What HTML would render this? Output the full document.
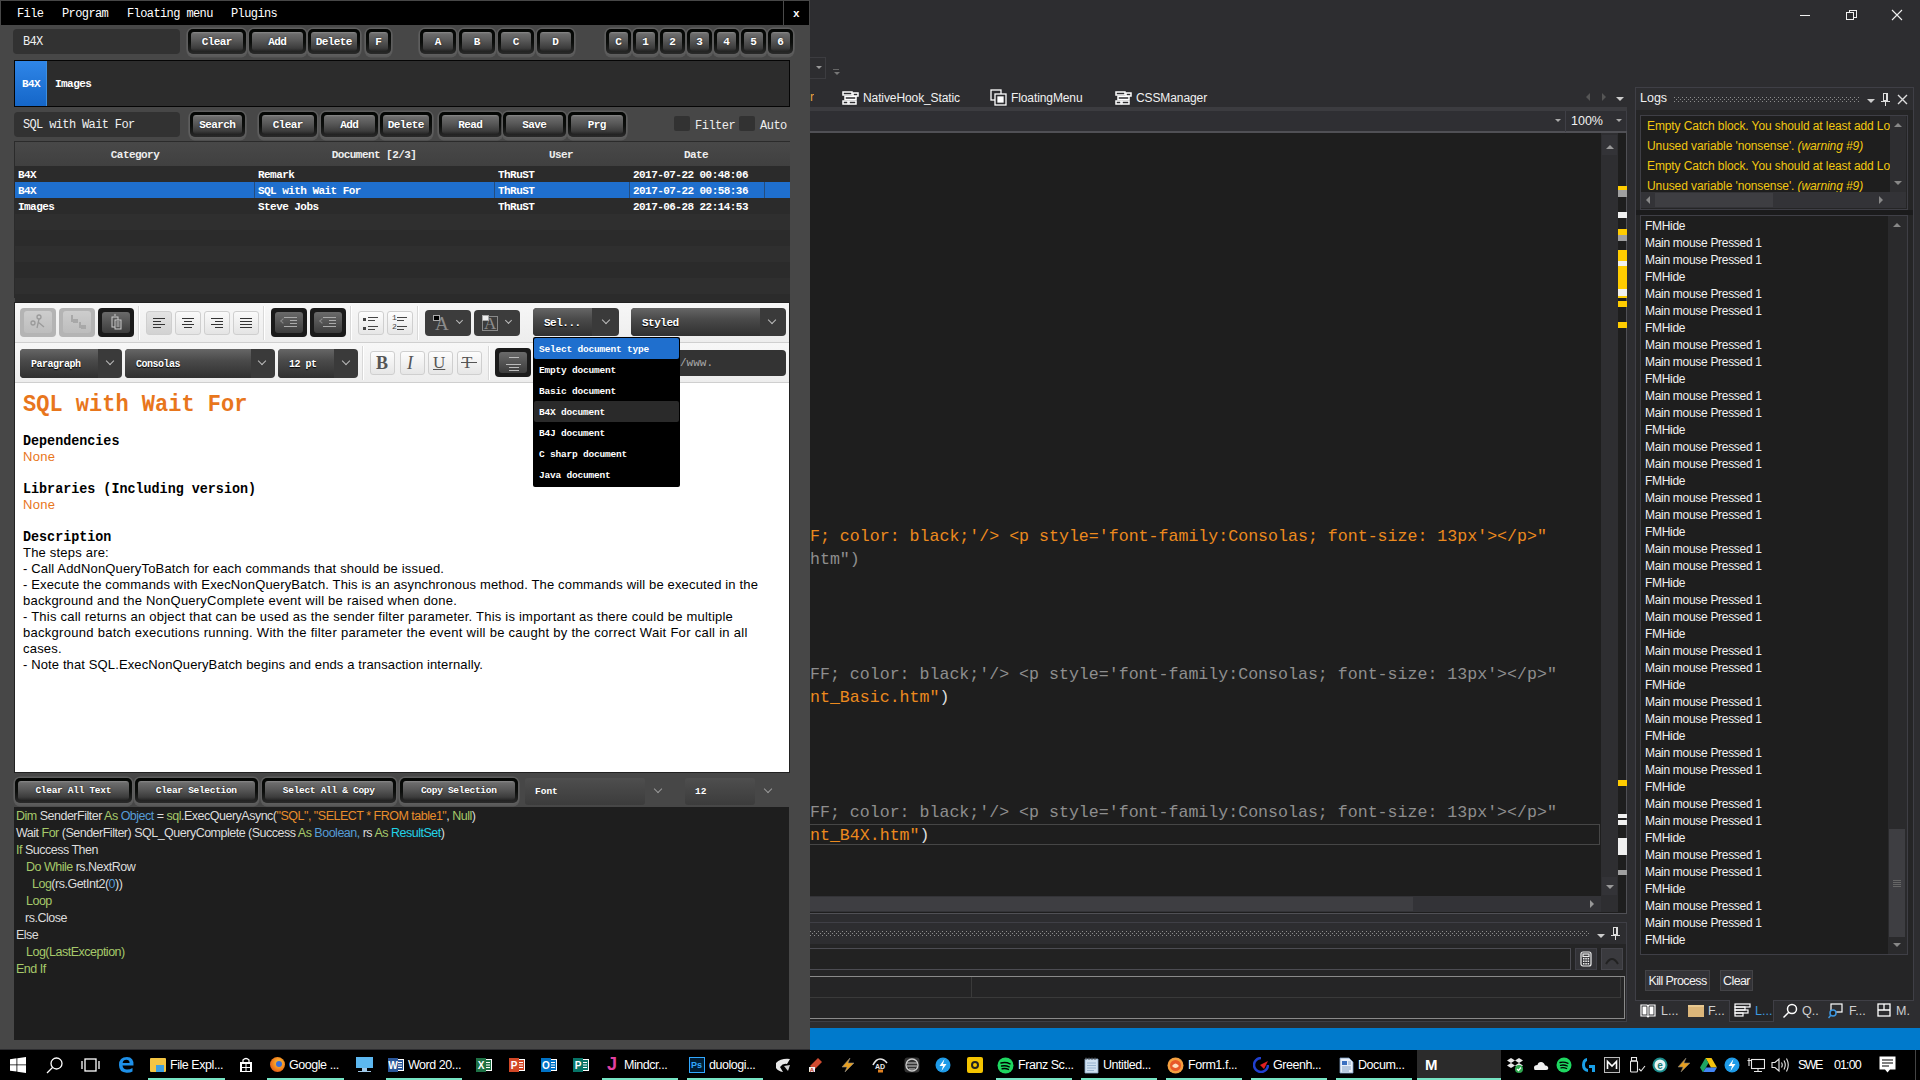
<!DOCTYPE html><html><head><meta charset="utf-8"><style>
*{margin:0;padding:0;box-sizing:border-box}
html,body{width:1920px;height:1080px;overflow:hidden;background:#2d2d30;font-family:"Liberation Sans",sans-serif}
.a{position:absolute}
.m{font-family:"Liberation Mono",monospace}
.s{font-family:"Liberation Sans",sans-serif}
.nw{white-space:nowrap}
#app{left:0;top:0;width:810px;height:1049px;background:#474747}
.tf{position:absolute;background:#323232;border-radius:4px;color:#f0f0f0;font-family:"Liberation Mono",monospace;font-size:12px;letter-spacing:-0.64px;white-space:nowrap}
.bf{position:absolute;background:linear-gradient(#030503,#0c0e0c 55%,#2a2a2a);border-radius:5px;box-shadow:0 0 0 1.5px #5e5e5e,0 2px 0 1.5px #595959}
.bi{position:absolute;left:2.5px;right:3px;top:2.5px;bottom:3px;background:linear-gradient(#8a8a8a,#6c6c6c 10%,#585858 45%,#3c3c3c 85%,#262626);border-radius:3px;color:#fff;font-weight:bold;font-size:11px;text-align:center;text-shadow:0 0 2px #222;font-family:"Liberation Mono",monospace;white-space:nowrap;letter-spacing:-0.6px}
.cell{position:absolute;color:#fff;font-family:"Liberation Mono",monospace;font-size:11px;letter-spacing:-0.55px;white-space:nowrap}
.tb{position:absolute;border:1px solid #cfcfcf;border-radius:3px;background:linear-gradient(#fdfdfd,#e6e6e6)}
.tbd{position:absolute;border-radius:4px;background:#1a1a1a}
.tbd>i{position:absolute;left:4px;right:4px;top:4px;bottom:4px;border-radius:3px;background:linear-gradient(#6a6a6a,#3c3c3c)}
.dd{position:absolute;border-radius:4px;background:#3a3a3a;color:#fff;font-family:"Liberation Mono",monospace;font-weight:bold;font-size:11px;white-space:nowrap}
.dd>.f{position:absolute;left:0;top:0;bottom:0;border-radius:4px 0 0 4px;background:linear-gradient(#666,#4a4a4a 40%,#303030)}
.chev{position:absolute;width:7px;height:7px;border-right:1.3px solid #bbb;border-bottom:1.3px solid #bbb;transform:rotate(45deg)}
.log{position:absolute;left:1645px;color:#f1f1f1;font-size:12px;white-space:nowrap}
</style></head><body><div id="app" class="a"><div class="a m" style="left:1px;top:1px;width:808px;height:24px;background:#000;color:#fff;font-size:12px;letter-spacing:-0.6px"><span class="a nw" style="left:16px;top:6px">File</span><span class="a nw" style="left:61px;top:6px">Program</span><span class="a nw" style="left:126px;top:6px">Floating menu</span><span class="a nw" style="left:230px;top:6px">Plugins</span><span class="a" style="left:792px;top:7px;font-size:11px;font-weight:bold">x</span><div class="a" style="left:782px;top:0;width:1px;height:24px;background:#4a4a4a"></div></div><div class="tf" style="left:13px;top:29px;width:167px;height:25px;line-height:27px;padding-left:10px">B4X</div><div class="bf" style="left:188px;top:29px;width:58px;height:25px"><div class="bi" style="line-height:19px;padding-top:1px;font-size:11px">Clear</div></div><div class="bf" style="left:249px;top:29px;width:57px;height:25px"><div class="bi" style="line-height:19px;padding-top:1px;font-size:11px">Add</div></div><div class="bf" style="left:308px;top:29px;width:52px;height:25px"><div class="bi" style="line-height:19px;padding-top:1px;font-size:11px">Delete</div></div><div class="bf" style="left:366px;top:29px;width:25px;height:25px"><div class="bi" style="line-height:19px;padding-top:1px;font-size:11px">F</div></div><div class="bf" style="left:420px;top:29px;width:36px;height:25px"><div class="bi" style="line-height:19px;padding-top:1px;font-size:11px">A</div></div><div class="bf" style="left:459px;top:29px;width:36px;height:25px"><div class="bi" style="line-height:19px;padding-top:1px;font-size:11px">B</div></div><div class="bf" style="left:498px;top:29px;width:36px;height:25px"><div class="bi" style="line-height:19px;padding-top:1px;font-size:11px">C</div></div><div class="bf" style="left:537px;top:29px;width:37px;height:25px"><div class="bi" style="line-height:19px;padding-top:1px;font-size:11px">D</div></div><div class="bf" style="left:606px;top:29px;width:25px;height:25px"><div class="bi" style="line-height:19px;padding-top:1px;font-size:11px">C</div></div><div class="bf" style="left:633px;top:29px;width:25px;height:25px"><div class="bi" style="line-height:19px;padding-top:1px;font-size:11px">1</div></div><div class="bf" style="left:660px;top:29px;width:25px;height:25px"><div class="bi" style="line-height:19px;padding-top:1px;font-size:11px">2</div></div><div class="bf" style="left:687px;top:29px;width:25px;height:25px"><div class="bi" style="line-height:19px;padding-top:1px;font-size:11px">3</div></div><div class="bf" style="left:714px;top:29px;width:25px;height:25px"><div class="bi" style="line-height:19px;padding-top:1px;font-size:11px">4</div></div><div class="bf" style="left:741px;top:29px;width:25px;height:25px"><div class="bi" style="line-height:19px;padding-top:1px;font-size:11px">5</div></div><div class="bf" style="left:768px;top:29px;width:25px;height:25px"><div class="bi" style="line-height:19px;padding-top:1px;font-size:11px">6</div></div><div class="a" style="left:14px;top:60px;width:776px;height:47px;background:#2c2c2c;border:1px solid #050505"></div><div class="a" style="left:15px;top:61px;width:32px;height:45px;background:linear-gradient(#2f86e8,#1566c8);border-right:1px solid #3d8fe0"></div><div class="cell" style="left:22px;top:78px;font-weight:bold">B4X</div><div class="cell" style="left:55px;top:78px;font-weight:bold">Images</div><div class="tf" style="left:14px;top:112px;width:166px;height:25px;line-height:27px;padding-left:9px">SQL with Wait For</div><div class="bf" style="left:190px;top:112px;width:55px;height:25px"><div class="bi" style="line-height:19px;padding-top:1px;font-size:11px">Search</div></div><div class="bf" style="left:259px;top:112px;width:58px;height:25px"><div class="bi" style="line-height:19px;padding-top:1px;font-size:11px">Clear</div></div><div class="bf" style="left:321px;top:112px;width:57px;height:25px"><div class="bi" style="line-height:19px;padding-top:1px;font-size:11px">Add</div></div><div class="bf" style="left:380px;top:112px;width:52px;height:25px"><div class="bi" style="line-height:19px;padding-top:1px;font-size:11px">Delete</div></div><div class="bf" style="left:439px;top:112px;width:63px;height:25px"><div class="bi" style="line-height:19px;padding-top:1px;font-size:11px">Read</div></div><div class="bf" style="left:503px;top:112px;width:63px;height:25px"><div class="bi" style="line-height:19px;padding-top:1px;font-size:11px">Save</div></div><div class="bf" style="left:568px;top:112px;width:58px;height:25px"><div class="bi" style="line-height:19px;padding-top:1px;font-size:11px">Prg</div></div><div class="a" style="left:674px;top:116px;width:16px;height:15px;background:#323232;border-radius:2px"></div><div class="cell" style="left:695px;top:119px;font-size:12px;letter-spacing:-0.5px;color:#eee">Filter</div><div class="a" style="left:739px;top:116px;width:16px;height:15px;background:#323232;border-radius:2px"></div><div class="cell" style="left:760px;top:119px;font-size:12px;letter-spacing:-0.5px;color:#eee">Auto</div><div class="a tbl" style="left:14px;top:141px;width:776px;height:157px;background:#2b2b2b"></div><div class="a" style="left:15px;top:142px;width:775px;height:24px;background:linear-gradient(#484848,#404040)"></div><div class="cell" style="left:35px;width:200px;text-align:center;top:149px;font-weight:bold;color:#eee">Category</div><div class="cell" style="left:274px;width:200px;text-align:center;top:149px;font-weight:bold;color:#eee">Document [2/3]</div><div class="cell" style="left:461px;width:200px;text-align:center;top:149px;font-weight:bold;color:#eee">User</div><div class="cell" style="left:596px;width:200px;text-align:center;top:149px;font-weight:bold;color:#eee">Date</div><div class="a" style="left:15px;top:166px;width:775px;height:16px;background:#2b2b2b"></div><div class="a" style="left:15px;top:182px;width:775px;height:16px;background:#2f2f2f"></div><div class="a" style="left:15px;top:198px;width:775px;height:16px;background:#2b2b2b"></div><div class="a" style="left:15px;top:214px;width:775px;height:16px;background:#2f2f2f"></div><div class="a" style="left:15px;top:230px;width:775px;height:16px;background:#2b2b2b"></div><div class="a" style="left:15px;top:246px;width:775px;height:16px;background:#2f2f2f"></div><div class="a" style="left:15px;top:262px;width:775px;height:16px;background:#2b2b2b"></div><div class="a" style="left:15px;top:278px;width:775px;height:16px;background:#2f2f2f"></div><div class="a" style="left:15px;top:294px;width:775px;height:16px;background:#2b2b2b"></div><div class="a" style="left:15px;top:182px;width:775px;height:16px;background:#1f6fce"></div><div class="a" style="left:254px;top:182px;width:1px;height:16px;background:#2b2b2b;opacity:.5"></div><div class="a" style="left:494px;top:182px;width:1px;height:16px;background:#2b2b2b;opacity:.5"></div><div class="a" style="left:629px;top:182px;width:1px;height:16px;background:#2b2b2b;opacity:.5"></div><div class="a" style="left:764px;top:182px;width:1px;height:16px;background:#2b2b2b;opacity:.5"></div><div class="cell" style="left:18px;top:169px;font-weight:bold">B4X</div><div class="cell" style="left:258px;top:169px;font-weight:bold">Remark</div><div class="cell" style="left:498px;top:169px;font-weight:bold">ThRuST</div><div class="cell" style="left:633px;top:169px;font-weight:bold">2017-07-22 00:48:06</div><div class="cell" style="left:18px;top:185px;font-weight:bold">B4X</div><div class="cell" style="left:258px;top:185px;font-weight:bold">SQL with Wait For</div><div class="cell" style="left:498px;top:185px;font-weight:bold">ThRuST</div><div class="cell" style="left:633px;top:185px;font-weight:bold">2017-07-22 00:58:36</div><div class="cell" style="left:18px;top:201px;font-weight:bold">Images</div><div class="cell" style="left:258px;top:201px;font-weight:bold">Steve Jobs</div><div class="cell" style="left:498px;top:201px;font-weight:bold">ThRuST</div><div class="cell" style="left:633px;top:201px;font-weight:bold">2017-06-28 22:14:53</div></div><div class="a" style="left:14px;top:302px;width:776px;height:471px;background:#fff;border:1px solid #222"></div><div class="a" style="left:15px;top:303px;width:774px;height:40px;background:linear-gradient(#f7f7f7,#ededed);border-bottom:1px solid #cfcfcf"></div><div class="a" style="left:15px;top:343px;width:774px;height:40px;background:linear-gradient(#f7f7f7,#ededed);border-bottom:1px solid #cfcfcf"></div><div class="a" style="left:138px;top:306px;width:1px;height:34px;background:#d9d9d9;box-shadow:1px 0 0 #fff"></div><div class="a" style="left:263px;top:306px;width:1px;height:34px;background:#d9d9d9;box-shadow:1px 0 0 #fff"></div><div class="a" style="left:350px;top:306px;width:1px;height:34px;background:#d9d9d9;box-shadow:1px 0 0 #fff"></div><div class="a" style="left:417px;top:306px;width:1px;height:34px;background:#d9d9d9;box-shadow:1px 0 0 #fff"></div><div class="a" style="left:362px;top:346px;width:1px;height:34px;background:#d9d9d9;box-shadow:1px 0 0 #fff"></div><div class="a" style="left:488px;top:346px;width:1px;height:34px;background:#d9d9d9;box-shadow:1px 0 0 #fff"></div><div class="a" style="left:20px;top:308px;width:36px;height:29px;border-radius:4px;background:#b4b4b4"><div class="a" style="left:4px;top:3px;width:28px;height:22px;border-radius:3px;background:linear-gradient(#cdcdcd,#bdbdbd)"></div></div><div class="a" style="left:59px;top:308px;width:36px;height:29px;border-radius:4px;background:#b4b4b4"><div class="a" style="left:4px;top:3px;width:28px;height:22px;border-radius:3px;background:linear-gradient(#cdcdcd,#bdbdbd)"></div></div><svg class="a" style="left:28px;top:312px" width="22" height="22" viewBox="0 0 22 22"><g stroke="#9a9a9a" stroke-width="1.3" fill="none"><circle cx="5" cy="11" r="2"/><circle cx="11" cy="5" r="2"/><path d="M11 7 L9 16 M10 10 L16 15"/></g></svg><svg class="a" style="left:67px;top:313px" width="22" height="20" viewBox="0 0 22 20"><g fill="#a8a8a8"><rect x="4" y="2" width="2" height="7"/><rect x="6" y="6" width="5" height="4"/><rect x="12" y="9" width="2" height="6"/><rect x="14" y="12" width="5" height="4"/></g></svg><div class="tbd" style="left:98px;top:308px;width:36px;height:29px"><i></i></div><svg class="a" style="left:106px;top:312px" width="20" height="20" viewBox="0 0 20 20"><g fill="none" stroke="#ccc" stroke-width="1"><rect x="6" y="5" width="6" height="10"/><rect x="9" y="8" width="6" height="9" fill="#555"/><path d="M10.5 10h3M10.5 12h3M10.5 14h3"/></g><circle cx="9" cy="3" r="1.2" fill="#999"/></svg><div class="tb" style="left:146px;top:311px;width:26px;height:24px;background:linear-gradient(#e4e4e4,#d2d2d2)"></div><div class="a" style="left:153px;top:318px;width:12px;height:1px;background:#333"></div><div class="a" style="left:153px;top:321px;width:8px;height:1px;background:#333"></div><div class="a" style="left:153px;top:324px;width:12px;height:1px;background:#333"></div><div class="a" style="left:153px;top:327px;width:8px;height:1px;background:#333"></div><div class="tb" style="left:175px;top:311px;width:26px;height:24px;background:linear-gradient(#fafafa,#e4e4e4)"></div><div class="a" style="left:182px;top:318px;width:12px;height:1px;background:#333"></div><div class="a" style="left:184px;top:321px;width:8px;height:1px;background:#333"></div><div class="a" style="left:182px;top:324px;width:12px;height:1px;background:#333"></div><div class="a" style="left:184px;top:327px;width:8px;height:1px;background:#333"></div><div class="tb" style="left:204px;top:311px;width:26px;height:24px;background:linear-gradient(#fafafa,#e4e4e4)"></div><div class="a" style="left:211px;top:318px;width:12px;height:1px;background:#333"></div><div class="a" style="left:215px;top:321px;width:8px;height:1px;background:#333"></div><div class="a" style="left:211px;top:324px;width:12px;height:1px;background:#333"></div><div class="a" style="left:215px;top:327px;width:8px;height:1px;background:#333"></div><div class="tb" style="left:233px;top:311px;width:26px;height:24px;background:linear-gradient(#fafafa,#e4e4e4)"></div><div class="a" style="left:240px;top:318px;width:12px;height:1px;background:#333"></div><div class="a" style="left:240px;top:321px;width:12px;height:1px;background:#333"></div><div class="a" style="left:240px;top:324px;width:12px;height:1px;background:#333"></div><div class="a" style="left:240px;top:327px;width:12px;height:1px;background:#333"></div><div class="tbd" style="left:271px;top:308px;width:36px;height:29px"><i></i></div><div class="a" style="left:284px;top:317px;width:13px;height:1px;background:#aaa"></div><div class="a" style="left:290px;top:320px;width:7px;height:1px;background:#aaa"></div><div class="a" style="left:290px;top:323px;width:7px;height:1px;background:#aaa"></div><div class="a" style="left:284px;top:326px;width:13px;height:1px;background:#aaa"></div><div class="a" style="left:281px;top:319px;width:4px;height:4px;border-left:1px solid #888;border-bottom:1px solid #888;transform:rotate(45deg)"></div><div class="tbd" style="left:310px;top:308px;width:36px;height:29px"><i></i></div><div class="a" style="left:323px;top:317px;width:13px;height:1px;background:#aaa"></div><div class="a" style="left:329px;top:320px;width:7px;height:1px;background:#aaa"></div><div class="a" style="left:329px;top:323px;width:7px;height:1px;background:#aaa"></div><div class="a" style="left:323px;top:326px;width:13px;height:1px;background:#aaa"></div><div class="a" style="left:320px;top:319px;width:4px;height:4px;border-left:1px solid #888;border-bottom:1px solid #888;transform:rotate(45deg)"></div><div class="tb" style="left:358px;top:311px;width:26px;height:24px"></div><div class="tb" style="left:387px;top:311px;width:26px;height:24px"></div><div class="a" style="left:363px;top:318px;width:3px;height:3px;background:#444"></div><div class="a" style="left:363px;top:327px;width:3px;height:3px;background:#444"></div><div class="a" style="left:368px;top:317px;width:10px;height:1px;background:#444"></div><div class="a" style="left:368px;top:320px;width:7px;height:1px;background:#444"></div><div class="a" style="left:368px;top:326px;width:10px;height:1px;background:#444"></div><div class="a" style="left:368px;top:329px;width:7px;height:1px;background:#444"></div><div class="a" style="left:397px;top:317px;width:10px;height:1px;background:#444"></div><div class="a" style="left:397px;top:320px;width:7px;height:1px;background:#444"></div><div class="a" style="left:397px;top:326px;width:10px;height:1px;background:#444"></div><div class="a" style="left:397px;top:329px;width:7px;height:1px;background:#444"></div><div class="a m" style="left:392px;top:313px;font-size:8px;line-height:9px;color:#444">1<br>2</div><div class="a" style="left:425px;top:310px;width:46px;height:26px;border-radius:4px;background:#3c3c3c"></div><div class="a" style="left:435px;top:315px;font-family:'Liberation Serif',serif;font-size:19px;line-height:17px;color:#8c8c8c">A</div><div class="a" style="left:433px;top:315px;width:7px;height:6px;background:#000;border:1px solid #aaa"></div><div class="chev" style="left:457px;top:318px;width:5px;height:5px"></div><div class="a" style="left:474px;top:310px;width:46px;height:26px;border-radius:4px;background:#3c3c3c"></div><div class="a" style="left:482px;top:316px;width:16px;height:15px;border:1px solid #8a8a8a"></div><div class="a" style="left:484px;top:315px;font-family:'Liberation Serif',serif;font-size:17px;line-height:17px;color:#8c8c8c">A</div><div class="a" style="left:482px;top:315px;width:7px;height:6px;background:#eee;border:1px solid #aaa"></div><div class="chev" style="left:506px;top:318px;width:5px;height:5px"></div><div class="dd" style="left:533px;top:308px;width:86px;height:28px;font-size:11px"><div class="f" style="width:59px"></div><span class="a" style="left:11px;top:1px;line-height:28px;letter-spacing:-0.5px;text-shadow:0 1px 1px #000">Sel...</span></div><div class="chev" style="left:603px;top:317px;width:6px;height:6px"></div><div class="dd" style="left:631px;top:308px;width:155px;height:28px;font-size:11px"><div class="f" style="width:129px"></div><span class="a" style="left:11px;top:1px;line-height:28px;letter-spacing:-0.5px;text-shadow:0 1px 1px #000">Styled</span></div><div class="chev" style="left:769px;top:317px;width:6px;height:6px"></div><div class="dd" style="left:20px;top:349px;width:102px;height:29px;font-size:10px"><div class="f" style="width:78px"></div><span class="a" style="left:11px;top:1px;line-height:29px;letter-spacing:-0.5px;text-shadow:0 1px 1px #000">Paragraph</span></div><div class="chev" style="left:107px;top:358px;width:6px;height:6px"></div><div class="dd" style="left:125px;top:349px;width:150px;height:29px;font-size:10px"><div class="f" style="width:126px"></div><span class="a" style="left:11px;top:1px;line-height:29px;letter-spacing:-0.5px;text-shadow:0 1px 1px #000">Consolas</span></div><div class="chev" style="left:259px;top:358px;width:6px;height:6px"></div><div class="dd" style="left:278px;top:349px;width:80px;height:29px;font-size:10px"><div class="f" style="width:56px"></div><span class="a" style="left:11px;top:1px;line-height:29px;letter-spacing:-0.5px;text-shadow:0 1px 1px #000">12 pt</span></div><div class="chev" style="left:343px;top:358px;width:6px;height:6px"></div><div class="tb" style="left:370px;top:351px;width:25px;height:24px"></div><div class="tb" style="left:400px;top:351px;width:25px;height:24px"></div><div class="tb" style="left:428px;top:351px;width:25px;height:24px"></div><div class="tb" style="left:457px;top:351px;width:25px;height:24px"></div><div class="a" style="left:376px;top:353px;font-family:'Liberation Serif',serif;font-weight:bold;font-size:18px;color:#555">B</div><div class="a" style="left:407px;top:353px;font-family:'Liberation Serif',serif;font-style:italic;font-size:18px;color:#555">I</div><div class="a" style="left:433px;top:353px;font-family:'Liberation Serif',serif;font-size:17px;color:#555;text-decoration:underline">U</div><div class="a" style="left:462px;top:353px;font-family:'Liberation Serif',serif;font-size:17px;color:#555">T</div><div class="a" style="left:461px;top:362px;width:16px;height:1px;background:#555"></div><div class="tbd" style="left:495px;top:348px;width:36px;height:29px"><i></i></div><div class="a" style="left:509px;top:357px;width:10px;height:1px;background:#bbb"></div><div class="a" style="left:506px;top:364px;width:15px;height:1px;background:#bbb"></div><div class="a" style="left:509px;top:367px;width:10px;height:1px;background:#bbb"></div><div class="a" style="left:509px;top:370px;width:10px;height:1px;background:#bbb"></div><div class="a m" style="left:600px;top:350px;width:186px;height:26px;border-radius:4px;background:#333;color:#aaa;font-size:11px;line-height:26px;padding-left:80px">/www.</div><div class="a m" style="left:533px;top:337px;width:147px;height:150px;background:#000;border-radius:2px;color:#fff;font-size:9.5px;font-weight:bold;letter-spacing:-0.2px"><div class="a nw" style="left:1px;top:1px;padding-top:1px;width:145px;height:21px;line-height:21px;padding-left:5px;background:#1f6fce;border-radius:2px">Select document type</div><div class="a nw" style="left:1px;top:22px;padding-top:1px;width:145px;height:21px;line-height:21px;padding-left:5px;background:transparent;border-radius:2px">Empty document</div><div class="a nw" style="left:1px;top:43px;padding-top:1px;width:145px;height:21px;line-height:21px;padding-left:5px;background:transparent;border-radius:2px">Basic document</div><div class="a nw" style="left:1px;top:64px;padding-top:1px;width:145px;height:21px;line-height:21px;padding-left:5px;background:#2a2a2a;border-radius:2px">B4X document</div><div class="a nw" style="left:1px;top:85px;padding-top:1px;width:145px;height:21px;line-height:21px;padding-left:5px;background:transparent;border-radius:2px">B4J document</div><div class="a nw" style="left:1px;top:106px;padding-top:1px;width:145px;height:21px;line-height:21px;padding-left:5px;background:transparent;border-radius:2px">C sharp document</div><div class="a nw" style="left:1px;top:127px;padding-top:1px;width:145px;height:21px;line-height:21px;padding-left:5px;background:transparent;border-radius:2px">Java document</div></div><div class="a m" style="left:23px;top:391.3px;font-size:22px;font-weight:bold;color:#e8761c;white-space:nowrap;transform:scaleY(1.11);transform-origin:0 0">SQL with Wait For</div><div class="a m" style="left:23px;top:433.4px;font-size:13.4px;font-weight:bold;color:#000;white-space:nowrap;transform:scaleY(1.12);transform-origin:0 0">Dependencies</div><div class="a s" style="left:23px;top:449px;font-size:13px;color:#e8761c;white-space:nowrap;letter-spacing:0.3px">None</div><div class="a m" style="left:23px;top:481.4px;font-size:13.4px;font-weight:bold;color:#000;white-space:nowrap;transform:scaleY(1.12);transform-origin:0 0">Libraries (Including version)</div><div class="a s" style="left:23px;top:497px;font-size:13px;color:#e8761c;white-space:nowrap;letter-spacing:0.3px">None</div><div class="a m" style="left:23px;top:529.4px;font-size:13.4px;font-weight:bold;color:#000;white-space:nowrap;transform:scaleY(1.12);transform-origin:0 0">Description</div><div class="a s" style="left:23px;top:545px;font-size:13px;color:#000;white-space:nowrap;letter-spacing:0.2px">The steps are:</div><div class="a s" style="left:23px;top:561px;font-size:13px;color:#000;white-space:nowrap;letter-spacing:0.161px">- Call AddNonQueryToBatch for each commands that should be issued.</div><div class="a s" style="left:23px;top:577px;font-size:13px;color:#000;white-space:nowrap;letter-spacing:0.15px">- Execute the commands with ExecNonQueryBatch. This is an asynchronous method. The commands will be executed in the</div><div class="a s" style="left:23px;top:593px;font-size:13px;color:#000;white-space:nowrap;letter-spacing:0.234px">background and the NonQueryComplete event will be raised when done.</div><div class="a s" style="left:23px;top:609px;font-size:13px;color:#000;white-space:nowrap;letter-spacing:0.225px">- This call returns an object that can be used as the sender filter parameter. This is important as there could be multiple</div><div class="a s" style="left:23px;top:625px;font-size:13px;color:#000;white-space:nowrap;letter-spacing:0.285px">background batch executions running. With the filter parameter the event will be caught by the correct Wait For call in all</div><div class="a s" style="left:23px;top:641px;font-size:13px;color:#000;white-space:nowrap;letter-spacing:0.2px">cases.</div><div class="a s" style="left:23px;top:657px;font-size:13px;color:#000;white-space:nowrap;letter-spacing:0.125px">- Note that SQL.ExecNonQueryBatch begins and ends a transaction internally.</div><div class="bf" style="left:15px;top:778px;width:117px;height:25px"><div class="bi" style="line-height:20px;font-size:9.5px;letter-spacing:-0.3px">Clear All Text</div></div><div class="bf" style="left:135px;top:778px;width:123px;height:25px"><div class="bi" style="line-height:20px;font-size:9.5px;letter-spacing:-0.3px">Clear Selection</div></div><div class="bf" style="left:262px;top:778px;width:134px;height:25px"><div class="bi" style="line-height:20px;font-size:9.5px;letter-spacing:-0.3px">Select All &amp; Copy</div></div><div class="bf" style="left:400px;top:778px;width:118px;height:25px"><div class="bi" style="line-height:20px;font-size:9.5px;letter-spacing:-0.3px">Copy Selection</div></div><div class="a m" style="left:525px;top:778px;width:120px;height:27px;border-radius:3px;background:linear-gradient(#4e4e4e,#3c3c3c);color:#fff;font-weight:bold;font-size:9.5px;line-height:27px;padding-left:10px">Font</div><div class="chev" style="left:655px;top:786px;width:6px;height:6px;border-color:#999"></div><div class="a m" style="left:685px;top:778px;width:70px;height:27px;border-radius:3px;background:linear-gradient(#4e4e4e,#3c3c3c);color:#fff;font-weight:bold;font-size:9.5px;line-height:27px;padding-left:10px">12</div><div class="chev" style="left:765px;top:786px;width:6px;height:6px;border-color:#999"></div><div class="a" style="left:14px;top:807px;width:775px;height:233px;background:#1e1e1e"></div><div class="a s nw" style="left:16px;top:808px;font-size:12.5px;line-height:17px;letter-spacing:-0.5px"><span style="color:#a6c96a">Dim </span><span style="color:#dcdcdc">SenderFilter </span><span style="color:#a6c96a">As </span><span style="color:#569cd6">Object</span><span style="color:#dcdcdc"> = </span><span style="color:#a6c96a">sql</span><span style="color:#dcdcdc">.ExecQueryAsync(</span><span style="color:#e88d2c">&quot;SQL&quot;, &quot;SELECT * FROM table1&quot;</span><span style="color:#dcdcdc">, </span><span style="color:#a6c96a">Null</span><span style="color:#dcdcdc">)</span></div><div class="a s nw" style="left:16px;top:825px;font-size:12.5px;line-height:17px;letter-spacing:-0.5px"><span style="color:#dcdcdc">Wait </span><span style="color:#a6c96a">For </span><span style="color:#dcdcdc">(SenderFilter) SQL_QueryComplete (Success </span><span style="color:#a6c96a">As </span><span style="color:#569cd6">Boolean,</span><span style="color:#dcdcdc"> rs </span><span style="color:#a6c96a">As </span><span style="color:#22d3e8">ResultSet</span><span style="color:#dcdcdc">)</span></div><div class="a s nw" style="left:16px;top:842px;font-size:12.5px;line-height:17px;letter-spacing:-0.5px"><span style="color:#a6c96a">If </span><span style="color:#dcdcdc">Success Then</span></div><div class="a s nw" style="left:26px;top:859px;font-size:12.5px;line-height:17px;letter-spacing:-0.5px"><span style="color:#a6c96a">Do While </span><span style="color:#dcdcdc">rs.NextRow</span></div><div class="a s nw" style="left:32px;top:876px;font-size:12.5px;line-height:17px;letter-spacing:-0.5px"><span style="color:#a6c96a">Log</span><span style="color:#dcdcdc">(rs.GetInt2(</span><span style="color:#569cd6">0</span><span style="color:#dcdcdc">))</span></div><div class="a s nw" style="left:26px;top:893px;font-size:12.5px;line-height:17px;letter-spacing:-0.5px"><span style="color:#a6c96a">Loop</span></div><div class="a s nw" style="left:25px;top:910px;font-size:12.5px;line-height:17px;letter-spacing:-0.5px"><span style="color:#dcdcdc">rs.Close</span></div><div class="a s nw" style="left:16px;top:927px;font-size:12.5px;line-height:17px;letter-spacing:-0.5px"><span style="color:#dcdcdc">Else</span></div><div class="a s nw" style="left:26px;top:944px;font-size:12.5px;line-height:17px;letter-spacing:-0.5px"><span style="color:#a6c96a">Log(LastException)</span></div><div class="a s nw" style="left:16px;top:961px;font-size:12.5px;line-height:17px;letter-spacing:-0.5px"><span style="color:#a6c96a">End If</span></div><div class="a" style="left:1800px;top:15px;width:10px;height:1px;background:#f0f0f0"></div><div class="a" style="left:1849px;top:10px;width:8px;height:8px;border:1px solid #f0f0f0"></div><div class="a" style="left:1846px;top:12px;width:8px;height:8px;border:1px solid #f0f0f0;background:#2d2d30"></div><svg class="a" style="left:1891px;top:9px" width="12" height="12" viewBox="0 0 12 12"><path d="M1 1L11 11M11 1L1 11" stroke="#f0f0f0" stroke-width="1.1"/></svg><div class="a" style="left:810px;top:57px;width:16px;height:22px;border:1px solid #3c3c40;border-left:none"></div><div class="a" style="left:816px;top:66px;width:0;height:0;border-left:3px solid transparent;border-right:3px solid transparent;border-top:3px solid #999"></div><div class="a" style="left:833px;top:69px;width:6px;height:1px;background:#666"></div><div class="a" style="left:834px;top:72px;width:0;height:0;border-left:3px solid transparent;border-right:3px solid transparent;border-top:3px solid #777"></div><div class="a s" style="left:810px;top:90px;font-size:12.5px;color:#e8a040;width:4px;overflow:hidden">r</div><svg class="a" style="left:842px;top:91px" width="17" height="14" viewBox="0 0 17 14"><g fill="none" stroke="#fff" stroke-width="1.5"><rect x="1" y="1" width="9" height="3"/><rect x="11" y="2" width="5" height="3"/><rect x="3" y="5.5" width="11" height="3"/><rect x="1" y="10" width="5" height="3"/><rect x="7" y="10" width="7" height="3"/></g></svg><svg class="a" style="left:990px;top:89px" width="17" height="17" viewBox="0 0 17 17"><g fill="none" stroke="#fff" stroke-width="1.3"><rect x="1" y="1" width="10" height="10"/><rect x="5" y="5" width="11" height="11" fill="#2d2d30"/><rect x="8" y="8" width="5" height="5" fill="#fff"/></g></svg><svg class="a" style="left:1115px;top:91px" width="17" height="14" viewBox="0 0 17 14"><g fill="none" stroke="#fff" stroke-width="1.5"><rect x="1" y="1" width="9" height="3"/><rect x="11" y="2" width="5" height="3"/><rect x="3" y="5.5" width="11" height="3"/><rect x="1" y="10" width="5" height="3"/><rect x="7" y="10" width="7" height="3"/></g></svg><div class="a s nw" style="left:863px;top:90px;font-size:12px;line-height:17px;letter-spacing:-0.1px;color:#f1f1f1">NativeHook_Static</div><div class="a s nw" style="left:1011px;top:90px;font-size:12px;line-height:17px;letter-spacing:-0.1px;color:#f1f1f1">FloatingMenu</div><div class="a s nw" style="left:1136px;top:90px;font-size:12px;line-height:17px;letter-spacing:-0.1px;color:#f1f1f1">CSSManager</div><div class="a" style="left:1586px;top:93px;width:0;height:0;border-top:4px solid transparent;border-bottom:4px solid transparent;border-right:4px solid #555"></div><div class="a" style="left:1602px;top:93px;width:0;height:0;border-top:4px solid transparent;border-bottom:4px solid transparent;border-left:4px solid #555"></div><div class="a" style="left:1616px;top:97px;width:0;height:0;border-left:4px solid transparent;border-right:4px solid transparent;border-top:4px solid #ccc"></div><div class="a" style="left:810px;top:107px;width:817px;height:4px;background:#3c3c40"></div><div class="a" style="left:810px;top:111px;width:817px;height:21px;background:#2f2f33;border-right:1px solid #3f3f46"></div><div class="a" style="left:810px;top:131px;width:817px;height:2px;background:#505055"></div><div class="a" style="left:1565px;top:111px;width:1px;height:21px;background:#3f3f46"></div><div class="a" style="left:1555px;top:119px;width:0;height:0;border-left:3.5px solid transparent;border-right:3.5px solid transparent;border-top:3.5px solid #aaa"></div><div class="a" style="left:1616px;top:119px;width:0;height:0;border-left:3.5px solid transparent;border-right:3.5px solid transparent;border-top:3.5px solid #aaa"></div><div class="a s" style="left:1571px;top:113px;font-size:12.5px;line-height:17px;color:#f1f1f1">100%</div><div class="a" style="left:810px;top:133px;width:817px;height:781px;background:#1e1e1e;border-right:1px solid #505055;border-bottom:1px solid #505055"></div><div class="a" style="left:1601px;top:133px;width:17px;height:779px;background:#2e2e31"></div><div class="a" style="left:1602px;top:135px;width:15px;height:20px;background:#333337"></div><div class="a" style="left:1606px;top:145px;width:0;height:0;border-left:4px solid transparent;border-right:4px solid transparent;border-bottom:4px solid #999"></div><div class="a" style="left:1602px;top:877px;width:15px;height:18px;background:#333337"></div><div class="a" style="left:1606px;top:885px;width:0;height:0;border-left:4px solid transparent;border-right:4px solid transparent;border-top:4px solid #999"></div><div class="a" style="left:1618px;top:186px;width:9px;height:4px;background:#ffcc00"></div><div class="a" style="left:1618px;top:190px;width:9px;height:7px;background:#a0a0a0"></div><div class="a" style="left:1618px;top:212px;width:9px;height:6px;background:#f0f0f0"></div><div class="a" style="left:1618px;top:229px;width:9px;height:6px;background:#ffcc00"></div><div class="a" style="left:1618px;top:235px;width:9px;height:6px;background:#a0a0a0"></div><div class="a" style="left:1618px;top:250px;width:9px;height:11px;background:#ffcc00"></div><div class="a" style="left:1618px;top:261px;width:9px;height:5px;background:#f0f0f0"></div><div class="a" style="left:1618px;top:266px;width:9px;height:23px;background:#ffcc00"></div><div class="a" style="left:1618px;top:289px;width:9px;height:7px;background:#f0f0f0"></div><div class="a" style="left:1618px;top:296px;width:9px;height:2px;background:#ffcc00"></div><div class="a" style="left:1618px;top:301px;width:9px;height:6px;background:#ffcc00"></div><div class="a" style="left:1618px;top:322px;width:9px;height:6px;background:#ffcc00"></div><div class="a" style="left:1618px;top:780px;width:9px;height:6px;background:#ffcc00"></div><div class="a" style="left:1618px;top:814px;width:9px;height:4px;background:#f0f0f0"></div><div class="a" style="left:1618px;top:820px;width:9px;height:5px;background:#f0f0f0"></div><div class="a" style="left:1618px;top:838px;width:9px;height:17px;background:#f0f0f0"></div><div class="a" style="left:1618px;top:870px;width:9px;height:5px;background:#a0a0a0"></div><div class="a" style="left:810px;top:896px;width:791px;height:16px;background:#333337"></div><div class="a" style="left:810px;top:897px;width:603px;height:14px;background:#3e3e42"></div><div class="a" style="left:1590px;top:900px;width:0;height:0;border-top:4px solid transparent;border-bottom:4px solid transparent;border-left:4px solid #999"></div><div class="a" style="left:810px;top:824px;width:790px;height:21px;border:1px solid #464646;border-left:none"></div><div class="a m nw" style="left:810px;top:525px;font-size:16.6px;line-height:23px"><span style="color:#ec8a1e">F; color: black;&#x27;/&gt; &lt;p style=&#x27;font-family:Consolas; font-size: 13px&#x27;&gt;&lt;/p&gt;&quot;</span></div><div class="a m nw" style="left:810px;top:548px;font-size:16.6px;line-height:23px"><span style="color:#8e8e8e">htm&quot;)</span></div><div class="a m nw" style="left:810px;top:663px;font-size:16.6px;line-height:23px"><span style="color:#8e8e8e">FF; color: black;&#x27;/&gt; &lt;p style=&#x27;font-family:Consolas; font-size: 13px&#x27;&gt;&lt;/p&gt;&quot;</span></div><div class="a m nw" style="left:810px;top:686px;font-size:16.6px;line-height:23px"><span style="color:#ec8a1e">nt_Basic.htm&quot;</span><span style="color:#dcdcdc">)</span></div><div class="a m nw" style="left:810px;top:801px;font-size:16.6px;line-height:23px"><span style="color:#8e8e8e">FF; color: black;&#x27;/&gt; &lt;p style=&#x27;font-family:Consolas; font-size: 13px&#x27;&gt;&lt;/p&gt;&quot;</span></div><div class="a m nw" style="left:810px;top:824px;font-size:16.6px;line-height:23px"><span style="color:#ec8a1e">nt_B4X.htm&quot;</span><span style="color:#dcdcdc">)</span></div><div class="a" style="left:810px;top:922px;width:817px;height:100px;background:#252526;border-top:1px solid #3f3f46;border-right:1px solid #3f3f46;border-bottom:1px solid #3f3f46"></div><div class="a" style="left:810px;top:923px;width:816px;height:21px;background:#2d2d30"></div><svg class="a" style="left:810px;top:931px" width="779" height="5"><defs><pattern id="dp1" width="4" height="4" patternUnits="userSpaceOnUse"><rect x="0" y="0" width="1" height="1" fill="#8c8c8c"/><rect x="2" y="2" width="1" height="1" fill="#8c8c8c"/></pattern></defs><rect width="779" height="5" fill="url(#dp1)"/></svg><div class="a" style="left:1597px;top:934px;width:0;height:0;border-left:4px solid transparent;border-right:4px solid transparent;border-top:4px solid #ccc"></div><svg class="a" style="left:1611px;top:927px" width="10" height="13" viewBox="0 0 10 13"><g stroke="#ddd" fill="none" stroke-width="1"><rect x="2.5" y="0.5" width="4" height="7"/><path d="M0 8.5H9M4.5 8.5V13M5.5 0.5V7.5"/></g></svg><div class="a" style="left:810px;top:948px;width:761px;height:22px;background:#222;border:1px solid #4c4c52;border-left:none"></div><div class="a" style="left:1575px;top:948px;width:22px;height:22px;background:#333337;border:1px solid #3f3f46"></div><svg class="a" style="left:1579px;top:951px" width="14" height="16" viewBox="0 0 14 16"><g fill="none" stroke="#eee" stroke-width="1.2"><rect x="2" y="1" width="10" height="14" rx="2"/><rect x="4" y="3" width="6" height="2.5"/></g><g fill="#eee"><rect x="4" y="7" width="1.5" height="1.5"/><rect x="6.3" y="7" width="1.5" height="1.5"/><rect x="8.6" y="7" width="1.5" height="1.5"/><rect x="4" y="9.5" width="1.5" height="1.5"/><rect x="6.3" y="9.5" width="1.5" height="1.5"/><rect x="8.6" y="9.5" width="1.5" height="1.5"/><rect x="4" y="12" width="1.5" height="1.5"/><rect x="6.3" y="12" width="1.5" height="1.5"/><rect x="8.6" y="12" width="1.5" height="1.5"/></g></svg><div class="a" style="left:1601px;top:948px;width:22px;height:22px;background:#3a3a3e;border:1px solid #46464c"></div><svg class="a" style="left:1604px;top:952px" width="16" height="14" viewBox="0 0 16 14"><path d="M2 12 Q8 2 14 12" stroke="#222" stroke-width="2" fill="none"/></svg><div class="a" style="left:810px;top:976px;width:815px;height:43px;border:1px solid #8a8a8a;border-left:none"></div><div class="a" style="left:810px;top:997px;width:811px;height:1px;background:#3a3a3a"></div><div class="a" style="left:971px;top:977px;width:1px;height:20px;background:#3a3a3a"></div><div class="a" style="left:1620px;top:977px;width:1px;height:20px;background:#3a3a3a"></div><div class="a" style="left:810px;top:1028px;width:1110px;height:22px;background:#007acc"></div><div class="a" style="left:1635px;top:87px;width:279px;height:914px;background:#252526;border:1px solid #3f3f46"></div><div class="a" style="left:1636px;top:88px;width:277px;height:22px;background:#2d2d30"></div><div class="a s" style="left:1640px;top:90px;font-size:12.5px;line-height:17px;color:#f1f1f1">Logs</div><svg class="a" style="left:1674px;top:97px" width="186" height="5"><defs><pattern id="dp2" width="4" height="4" patternUnits="userSpaceOnUse"><rect x="0" y="0" width="1" height="1" fill="#8c8c8c"/><rect x="2" y="2" width="1" height="1" fill="#8c8c8c"/></pattern></defs><rect width="186" height="5" fill="url(#dp2)"/></svg><div class="a" style="left:1867px;top:99px;width:0;height:0;border-left:4px solid transparent;border-right:4px solid transparent;border-top:4px solid #ccc"></div><svg class="a" style="left:1881px;top:93px" width="10" height="13" viewBox="0 0 10 13"><g stroke="#ddd" fill="none" stroke-width="1"><rect x="2.5" y="0.5" width="4" height="7"/><path d="M0 8.5H9M4.5 8.5V13M5.5 0.5V7.5"/></g></svg><svg class="a" style="left:1897px;top:94px" width="11" height="11" viewBox="0 0 11 11"><path d="M1 1L10 10M10 1L1 10" stroke="#ddd" stroke-width="1.4"/></svg><div class="a" style="left:1640px;top:115px;width:268px;height:95px;background:#252526;border:1px solid #3f3f46"></div><div class="a" style="left:1641px;top:116px;width:249px;height:76px;background:#1e1e1e;overflow:hidden"><div class="a s nw" style="left:6px;top:2px;font-size:12px;line-height:17px;letter-spacing:-0.1px;color:#f2c811">Empty Catch block. You should at least add Log(LastException).</div><div class="a s nw" style="left:6px;top:22px;font-size:12px;line-height:17px;letter-spacing:-0.1px;color:#f2c811">Unused variable &#x27;nonsense&#x27;.<i> (warning #9)</i></div><div class="a s nw" style="left:6px;top:42px;font-size:12px;line-height:17px;letter-spacing:-0.1px;color:#f2c811">Empty Catch block. You should at least add Log(LastException).</div><div class="a s nw" style="left:6px;top:62px;font-size:12px;line-height:17px;letter-spacing:-0.1px;color:#f2c811">Unused variable &#x27;nonsense&#x27;.<i> (warning #9)</i></div></div><div class="a" style="left:1890px;top:116px;width:16px;height:76px;background:#2e2e31"></div><div class="a" style="left:1894px;top:123px;width:0;height:0;border-left:4px solid transparent;border-right:4px solid transparent;border-bottom:4px solid #888"></div><div class="a" style="left:1894px;top:181px;width:0;height:0;border-left:4px solid transparent;border-right:4px solid transparent;border-top:4px solid #888"></div><div class="a" style="left:1641px;top:192px;width:265px;height:16px;background:#333337"></div><div class="a" style="left:1655px;top:193px;width:118px;height:14px;background:#3e3e42"></div><div class="a" style="left:1646px;top:196px;width:0;height:0;border-top:4px solid transparent;border-bottom:4px solid transparent;border-right:4px solid #888"></div><div class="a" style="left:1879px;top:196px;width:0;height:0;border-top:4px solid transparent;border-bottom:4px solid transparent;border-left:4px solid #888"></div><div class="a" style="left:1636px;top:210px;width:277px;height:5px;background:#1b1b1c"></div><div class="a" style="left:1640px;top:215px;width:268px;height:740px;background:#1e1e1e;border:1px solid #3f3f46"></div><div class="a s nw" style="left:1645px;top:218px;font-size:12px;line-height:17px;letter-spacing:-0.3px;color:#f1f1f1">FMHide</div><div class="a s nw" style="left:1645px;top:235px;font-size:12px;line-height:17px;letter-spacing:-0.3px;color:#f1f1f1">Main mouse Pressed 1</div><div class="a s nw" style="left:1645px;top:252px;font-size:12px;line-height:17px;letter-spacing:-0.3px;color:#f1f1f1">Main mouse Pressed 1</div><div class="a s nw" style="left:1645px;top:269px;font-size:12px;line-height:17px;letter-spacing:-0.3px;color:#f1f1f1">FMHide</div><div class="a s nw" style="left:1645px;top:286px;font-size:12px;line-height:17px;letter-spacing:-0.3px;color:#f1f1f1">Main mouse Pressed 1</div><div class="a s nw" style="left:1645px;top:303px;font-size:12px;line-height:17px;letter-spacing:-0.3px;color:#f1f1f1">Main mouse Pressed 1</div><div class="a s nw" style="left:1645px;top:320px;font-size:12px;line-height:17px;letter-spacing:-0.3px;color:#f1f1f1">FMHide</div><div class="a s nw" style="left:1645px;top:337px;font-size:12px;line-height:17px;letter-spacing:-0.3px;color:#f1f1f1">Main mouse Pressed 1</div><div class="a s nw" style="left:1645px;top:354px;font-size:12px;line-height:17px;letter-spacing:-0.3px;color:#f1f1f1">Main mouse Pressed 1</div><div class="a s nw" style="left:1645px;top:371px;font-size:12px;line-height:17px;letter-spacing:-0.3px;color:#f1f1f1">FMHide</div><div class="a s nw" style="left:1645px;top:388px;font-size:12px;line-height:17px;letter-spacing:-0.3px;color:#f1f1f1">Main mouse Pressed 1</div><div class="a s nw" style="left:1645px;top:405px;font-size:12px;line-height:17px;letter-spacing:-0.3px;color:#f1f1f1">Main mouse Pressed 1</div><div class="a s nw" style="left:1645px;top:422px;font-size:12px;line-height:17px;letter-spacing:-0.3px;color:#f1f1f1">FMHide</div><div class="a s nw" style="left:1645px;top:439px;font-size:12px;line-height:17px;letter-spacing:-0.3px;color:#f1f1f1">Main mouse Pressed 1</div><div class="a s nw" style="left:1645px;top:456px;font-size:12px;line-height:17px;letter-spacing:-0.3px;color:#f1f1f1">Main mouse Pressed 1</div><div class="a s nw" style="left:1645px;top:473px;font-size:12px;line-height:17px;letter-spacing:-0.3px;color:#f1f1f1">FMHide</div><div class="a s nw" style="left:1645px;top:490px;font-size:12px;line-height:17px;letter-spacing:-0.3px;color:#f1f1f1">Main mouse Pressed 1</div><div class="a s nw" style="left:1645px;top:507px;font-size:12px;line-height:17px;letter-spacing:-0.3px;color:#f1f1f1">Main mouse Pressed 1</div><div class="a s nw" style="left:1645px;top:524px;font-size:12px;line-height:17px;letter-spacing:-0.3px;color:#f1f1f1">FMHide</div><div class="a s nw" style="left:1645px;top:541px;font-size:12px;line-height:17px;letter-spacing:-0.3px;color:#f1f1f1">Main mouse Pressed 1</div><div class="a s nw" style="left:1645px;top:558px;font-size:12px;line-height:17px;letter-spacing:-0.3px;color:#f1f1f1">Main mouse Pressed 1</div><div class="a s nw" style="left:1645px;top:575px;font-size:12px;line-height:17px;letter-spacing:-0.3px;color:#f1f1f1">FMHide</div><div class="a s nw" style="left:1645px;top:592px;font-size:12px;line-height:17px;letter-spacing:-0.3px;color:#f1f1f1">Main mouse Pressed 1</div><div class="a s nw" style="left:1645px;top:609px;font-size:12px;line-height:17px;letter-spacing:-0.3px;color:#f1f1f1">Main mouse Pressed 1</div><div class="a s nw" style="left:1645px;top:626px;font-size:12px;line-height:17px;letter-spacing:-0.3px;color:#f1f1f1">FMHide</div><div class="a s nw" style="left:1645px;top:643px;font-size:12px;line-height:17px;letter-spacing:-0.3px;color:#f1f1f1">Main mouse Pressed 1</div><div class="a s nw" style="left:1645px;top:660px;font-size:12px;line-height:17px;letter-spacing:-0.3px;color:#f1f1f1">Main mouse Pressed 1</div><div class="a s nw" style="left:1645px;top:677px;font-size:12px;line-height:17px;letter-spacing:-0.3px;color:#f1f1f1">FMHide</div><div class="a s nw" style="left:1645px;top:694px;font-size:12px;line-height:17px;letter-spacing:-0.3px;color:#f1f1f1">Main mouse Pressed 1</div><div class="a s nw" style="left:1645px;top:711px;font-size:12px;line-height:17px;letter-spacing:-0.3px;color:#f1f1f1">Main mouse Pressed 1</div><div class="a s nw" style="left:1645px;top:728px;font-size:12px;line-height:17px;letter-spacing:-0.3px;color:#f1f1f1">FMHide</div><div class="a s nw" style="left:1645px;top:745px;font-size:12px;line-height:17px;letter-spacing:-0.3px;color:#f1f1f1">Main mouse Pressed 1</div><div class="a s nw" style="left:1645px;top:762px;font-size:12px;line-height:17px;letter-spacing:-0.3px;color:#f1f1f1">Main mouse Pressed 1</div><div class="a s nw" style="left:1645px;top:779px;font-size:12px;line-height:17px;letter-spacing:-0.3px;color:#f1f1f1">FMHide</div><div class="a s nw" style="left:1645px;top:796px;font-size:12px;line-height:17px;letter-spacing:-0.3px;color:#f1f1f1">Main mouse Pressed 1</div><div class="a s nw" style="left:1645px;top:813px;font-size:12px;line-height:17px;letter-spacing:-0.3px;color:#f1f1f1">Main mouse Pressed 1</div><div class="a s nw" style="left:1645px;top:830px;font-size:12px;line-height:17px;letter-spacing:-0.3px;color:#f1f1f1">FMHide</div><div class="a s nw" style="left:1645px;top:847px;font-size:12px;line-height:17px;letter-spacing:-0.3px;color:#f1f1f1">Main mouse Pressed 1</div><div class="a s nw" style="left:1645px;top:864px;font-size:12px;line-height:17px;letter-spacing:-0.3px;color:#f1f1f1">Main mouse Pressed 1</div><div class="a s nw" style="left:1645px;top:881px;font-size:12px;line-height:17px;letter-spacing:-0.3px;color:#f1f1f1">FMHide</div><div class="a s nw" style="left:1645px;top:898px;font-size:12px;line-height:17px;letter-spacing:-0.3px;color:#f1f1f1">Main mouse Pressed 1</div><div class="a s nw" style="left:1645px;top:915px;font-size:12px;line-height:17px;letter-spacing:-0.3px;color:#f1f1f1">Main mouse Pressed 1</div><div class="a s nw" style="left:1645px;top:932px;font-size:12px;line-height:17px;letter-spacing:-0.3px;color:#f1f1f1">FMHide</div><div class="a" style="left:1888px;top:216px;width:19px;height:738px;background:#2a2a2c"></div><div class="a" style="left:1889px;top:829px;width:16px;height:108px;background:#3e3e42"></div><div class="a" style="left:1893px;top:880px;width:8px;height:1px;background:#666"></div><div class="a" style="left:1893px;top:882px;width:8px;height:1px;background:#666"></div><div class="a" style="left:1893px;top:884px;width:8px;height:1px;background:#666"></div><div class="a" style="left:1893px;top:886px;width:8px;height:1px;background:#666"></div><div class="a" style="left:1893px;top:223px;width:0;height:0;border-left:4px solid transparent;border-right:4px solid transparent;border-bottom:4px solid #888"></div><div class="a" style="left:1893px;top:943px;width:0;height:0;border-left:4px solid transparent;border-right:4px solid transparent;border-top:4px solid #888"></div><div class="a s nw" style="left:1645px;top:970px;width:65px;height:21px;background:#333337;border:1px solid #434346;color:#f1f1f1;font-size:12.5px;line-height:21px;letter-spacing:-0.6px;text-align:center">Kill Process</div><div class="a s nw" style="left:1720px;top:970px;width:33px;height:21px;background:#333337;border:1px solid #434346;color:#f1f1f1;font-size:12.5px;line-height:21px;letter-spacing:-0.6px;text-align:center">Clear</div><div class="a" style="left:1729px;top:1000px;width:45px;height:22px;background:#252526;border:1px solid #3f3f46;border-top:none"></div><svg class="a" style="left:1640px;top:1004px" width="17" height="14" viewBox="0 0 17 14"><g fill="#f0f0f0" stroke="#fff" stroke-width="1.2"><path d="M1 1h6l1 1 1-1h6v11H9l-1 1-1-1H1z" fill="none"/><path d="M8 2v10"/><rect x="2.5" y="2.5" width="4" height="8" fill="#fff" stroke="none"/><rect x="9.5" y="2.5" width="4" height="8" fill="#fff" stroke="none"/></g></svg><div class="a" style="left:1688px;top:1005px;width:16px;height:12px;background:#dcb67a;border-top:2px solid #e8c890"></div><svg class="a" style="left:1734px;top:1003px" width="17" height="16" viewBox="0 0 17 16"><g fill="none" stroke="#fff" stroke-width="1.2"><rect x="1" y="1" width="15" height="3"/><rect x="1" y="4" width="10" height="3"/><rect x="1" y="7" width="13" height="3"/><rect x="1" y="10" width="8" height="3"/></g></svg><svg class="a" style="left:1782px;top:1003px" width="16" height="16" viewBox="0 0 16 16"><g fill="none" stroke="#fff" stroke-width="1.5"><circle cx="10" cy="6" r="4.5"/><path d="M7 9L1.5 14.5"/></g></svg><svg class="a" style="left:1828px;top:1003px" width="15" height="16" viewBox="0 0 15 16"><g fill="none" stroke="#fff" stroke-width="1.2"><rect x="3" y="1" width="11" height="8"/></g><circle cx="5" cy="10" r="3" fill="#1e1e1e" stroke="#3c96e0" stroke-width="1.5"/><path d="M3 12L0.5 15" stroke="#3c96e0" stroke-width="1.5"/></svg><svg class="a" style="left:1877px;top:1003px" width="14" height="14" viewBox="0 0 14 14"><g fill="none" stroke="#fff" stroke-width="1.3"><rect x="1" y="1" width="12" height="12"/><path d="M1 7H13M7 1V7"/></g></svg><div class="a s nw" style="left:1661px;top:1003px;font-size:12.5px;line-height:17px;color:#d0d0d0">L...</div><div class="a s nw" style="left:1708px;top:1003px;font-size:12.5px;line-height:17px;color:#d0d0d0">F...</div><div class="a s nw" style="left:1755px;top:1003px;font-size:12.5px;line-height:17px;color:#3c9ae0">L...</div><div class="a s nw" style="left:1802px;top:1003px;font-size:12.5px;line-height:17px;color:#d0d0d0">Q..</div><div class="a s nw" style="left:1849px;top:1003px;font-size:12.5px;line-height:17px;color:#d0d0d0">F...</div><div class="a s nw" style="left:1896px;top:1003px;font-size:12.5px;line-height:17px;color:#d0d0d0">M.</div><div class="a" style="left:0;top:1050px;width:1920px;height:30px;background:#000"></div><div class="a" style="left:1417px;top:1050px;width:84px;height:30px;background:#2b2b2b"></div><svg class="a" style="left:10px;top:1057px" width="16" height="16" viewBox="0 0 16 16"><g fill="#fff"><path d="M0 2.2L6.5 1.3V7.5H0z"/><path d="M7.3 1.2L16 0V7.5H7.3z"/><path d="M0 8.3H6.5V14.6L0 13.7z"/><path d="M7.3 8.3H16V16L7.3 14.8z"/></g></svg><svg class="a" style="left:46px;top:1057px" width="17" height="17" viewBox="0 0 17 17"><g fill="none" stroke="#fff" stroke-width="1.3"><circle cx="10.5" cy="6.5" r="5.5"/><path d="M6.5 10.5L1 16"/></g></svg><svg class="a" style="left:80px;top:1057px" width="21" height="16" viewBox="0 0 21 16"><g fill="none" stroke="#fff" stroke-width="1.3"><rect x="5" y="2" width="11" height="12"/><path d="M2 4V12M19 4V12"/></g></svg><svg class="a" style="left:118px;top:1056px" width="17" height="17" viewBox="0 0 17 17"><path d="M15.5 9.5H4.5Q5 13.5 9 13.5Q12 13.5 14.5 12V15.5Q12 17 8.5 16.8Q1 16.3 1 9Q1 1 9 1Q16 1 15.5 9.5z M4.6 7H11.6Q11.5 3.8 8.3 3.8Q5.2 3.8 4.6 7z" fill="#1e90e8" fill-rule="evenodd"/></svg><div class="a" style="left:148px;top:1078px;width:77px;height:2px;background:#76e4c4"></div><div class="a" style="left:267px;top:1078px;width:77px;height:2px;background:#76e4c4"></div><div class="a" style="left:386px;top:1078px;width:76px;height:2px;background:#76e4c4"></div><div class="a" style="left:602px;top:1078px;width:76px;height:2px;background:#76e4c4"></div><div class="a" style="left:687px;top:1078px;width:76px;height:2px;background:#76e4c4"></div><div class="a" style="left:996px;top:1078px;width:76px;height:2px;background:#76e4c4"></div><div class="a" style="left:1081px;top:1078px;width:76px;height:2px;background:#76e4c4"></div><div class="a" style="left:1166px;top:1078px;width:76px;height:2px;background:#76e4c4"></div><div class="a" style="left:1251px;top:1078px;width:76px;height:2px;background:#76e4c4"></div><div class="a" style="left:1336px;top:1078px;width:76px;height:2px;background:#76e4c4"></div><div class="a" style="left:1417px;top:1078px;width:84px;height:2px;background:#76e4c4"></div><div class="a" style="left:150px;top:1058px;width:16px;height:14px;background:#f4c542;border-radius:1px"></div><div class="a" style="left:156px;top:1065px;width:8px;height:7px;background:#3ea0e0;"></div><svg class="a" style="left:239px;top:1057px" width="14" height="16" viewBox="0 0 14 16"><g fill="#fff"><path d="M1 5H13V15H1z"/></g><g fill="#000"><rect x="3" y="7" width="3.5" height="3"/><rect x="7.5" y="7" width="3.5" height="3"/><rect x="3" y="11" width="3.5" height="3"/><rect x="7.5" y="11" width="3.5" height="3"/></g><path d="M4 5V3Q7 0 10 3V5" stroke="#fff" fill="none" stroke-width="1.2"/></svg><div class="a" style="left:270px;top:1057px;width:15px;height:15px;border-radius:50%;background:radial-gradient(circle at 60% 40%,#ffcd3c,#f07a1a 55%,#c43a20)"></div><div class="a" style="left:276px;top:1061px;width:6px;height:6px;background:#3b6fd8;border-radius:50%"></div><div class="a" style="left:356px;top:1057px;width:17px;height:11px;background:#5db8f0;"></div><div class="a" style="left:362px;top:1068px;width:5px;height:3px;background:#a0c8e8;"></div><div class="a" style="left:358px;top:1071px;width:13px;height:1px;background:#a0c8e8;"></div><svg class="a" style="left:388px;top:1057px" width="16" height="16" viewBox="0 0 16 16"><rect x="6" y="2" width="10" height="12" fill="#fff"/><rect x="7" y="3" width="8" height="10" fill="#2b579a"/><g stroke="#fff" stroke-width="1"><path d="M10 5.5H14M10 8H14M10 10.5H14"/></g><rect x="0" y="1" width="10" height="14" fill="#2b579a"/><text x="5" y="12" font-family="Liberation Sans" font-weight="bold" font-size="10" text-anchor="middle" fill="#fff">W</text></svg><svg class="a" style="left:476px;top:1057px" width="16" height="16" viewBox="0 0 16 16"><rect x="6" y="2" width="10" height="12" fill="#fff"/><rect x="7" y="3" width="8" height="10" fill="#1e7145"/><g stroke="#fff" stroke-width="1"><path d="M10 5.5H14M10 8H14M10 10.5H14"/></g><rect x="0" y="1" width="10" height="14" fill="#1e7145"/><text x="5" y="12" font-family="Liberation Sans" font-weight="bold" font-size="10" text-anchor="middle" fill="#fff">X</text></svg><svg class="a" style="left:509px;top:1057px" width="16" height="16" viewBox="0 0 16 16"><rect x="6" y="2" width="10" height="12" fill="#fff"/><rect x="7" y="3" width="8" height="10" fill="#d24726"/><g stroke="#fff" stroke-width="1"><path d="M10 5.5H14M10 8H14M10 10.5H14"/></g><rect x="0" y="1" width="10" height="14" fill="#d24726"/><text x="5" y="12" font-family="Liberation Sans" font-weight="bold" font-size="10" text-anchor="middle" fill="#fff">P</text></svg><svg class="a" style="left:541px;top:1057px" width="16" height="16" viewBox="0 0 16 16"><rect x="6" y="2" width="10" height="12" fill="#fff"/><rect x="7" y="3" width="8" height="10" fill="#0072c6"/><g stroke="#fff" stroke-width="1"><path d="M10 5.5H14M10 8H14M10 10.5H14"/></g><rect x="0" y="1" width="10" height="14" fill="#0072c6"/><text x="5" y="12" font-family="Liberation Sans" font-weight="bold" font-size="10" text-anchor="middle" fill="#fff">O</text></svg><svg class="a" style="left:573px;top:1057px" width="16" height="16" viewBox="0 0 16 16"><rect x="6" y="2" width="10" height="12" fill="#fff"/><rect x="7" y="3" width="8" height="10" fill="#077568"/><g stroke="#fff" stroke-width="1"><path d="M10 5.5H14M10 8H14M10 10.5H14"/></g><rect x="0" y="1" width="10" height="14" fill="#077568"/><text x="5" y="12" font-family="Liberation Sans" font-weight="bold" font-size="10" text-anchor="middle" fill="#fff">P</text></svg><div class="a s" style="left:607px;top:1052px;font-size:18px;line-height:24px;color:#e040a0;font-weight:bold">J</div><div class="a" style="left:689px;top:1057px;width:16px;height:16px;background:#001d34;border:1px solid #31a8ff"></div><div class="a s" style="left:691px;top:1057px;font-size:9px;line-height:16px;color:#31a8ff;font-weight:bold">Ps</div><svg class="a" style="left:775px;top:1057px" width="16" height="16" viewBox="0 0 16 16"><path d="M1 6Q6 1 15 2L12 7Q8 6 5 10L8 15Q3 14 1 11z" fill="#e8e8e8"/><path d="M9 9L15 8 13 14z" fill="#cfcfcf"/></svg><svg class="a" style="left:807px;top:1057px" width="16" height="16" viewBox="0 0 16 16"><path d="M3 9L11 1 15 5 7 13z" fill="#d04a30"/><path d="M2 10h6v5H2z" fill="#f0f0f0"/><text x="5" y="14.5" font-size="6" font-family="Liberation Sans" font-weight="bold" text-anchor="middle" fill="#c03020">A</text></svg><svg class="a" style="left:840px;top:1057px" width="16" height="16" viewBox="0 0 16 16"><path d="M2 10L10 1 8 6 14 6 5 15 7 10z" fill="#e8a020" stroke="#888" stroke-width="0.6"/></svg><svg class="a" style="left:872px;top:1057px" width="16" height="16" viewBox="0 0 16 16"><path d="M1 8Q4 2 8 2Q12 2 15 6" stroke="#e8e8e8" stroke-width="1.6" fill="none"/><text x="8" y="12" font-size="7" font-family="Liberation Sans" font-weight="bold" text-anchor="middle" fill="#e8e8e8">AD</text><rect x="6" y="12.5" width="5" height="3" fill="#e08020"/></svg><svg class="a" style="left:904px;top:1057px" width="16" height="16" viewBox="0 0 16 16"><rect x="0.5" y="0.5" width="15" height="15" rx="3" fill="#333"/><circle cx="8" cy="8" r="6" fill="none" stroke="#ccc" stroke-width="1.3"/><path d="M3 6H13M3 9H13M5 12H11" stroke="#ccc" stroke-width="1"/></svg><svg class="a" style="left:935px;top:1057px" width="16" height="16" viewBox="0 0 16 16"><circle cx="8" cy="8" r="7.5" fill="#1e9be8"/><path d="M9.5 2L4.5 9H8L6.5 14 11.5 7H8z" fill="#fff"/></svg><div class="a" style="left:967px;top:1057px;width:16px;height:16px;background:#f5c400;border-radius:2px"></div><div class="a" style="left:971px;top:1061px;width:8px;height:8px;border:2px solid #222;border-radius:50%"></div><svg class="a" style="left:997px;top:1057px" width="17" height="17" viewBox="0 0 17 17"><circle cx="8.5" cy="8.5" r="8" fill="#1ed760"/><g stroke="#000" stroke-width="1.5" fill="none" stroke-linecap="round"><path d="M4 6Q8.5 4.5 13 6.8"/><path d="M4.6 9Q8.5 8 12.2 9.8"/><path d="M5.2 11.8Q8.5 11 11.4 12.4"/></g></svg><svg class="a" style="left:1084px;top:1057px" width="15" height="17" viewBox="0 0 15 17"><path d="M1 2H14V16H1z" fill="#cfe0f0" stroke="#8aa8c8" stroke-width="0.8"/><g stroke="#8aa8c8" stroke-width="0.8"><path d="M3 6H12M3 8.5H12M3 11H12M3 13.5H10"/></g><path d="M2 0.5V3M5 0.5V3M8 0.5V3M11 0.5V3" stroke="#555" stroke-width="0.9"/></svg><svg class="a" style="left:1167px;top:1057px" width="17" height="17" viewBox="0 0 17 17"><circle cx="8.5" cy="8.5" r="8" fill="#f5a040"/><circle cx="8.5" cy="8.5" r="5.5" fill="#e8582a"/><path d="M5 9Q8.5 4 12 9Q8.5 13 5 9z" fill="#fde0c0"/></svg><svg class="a" style="left:1253px;top:1057px" width="16" height="16" viewBox="0 0 16 16"><path d="M8 1A7 7 0 1 0 15 8" stroke="#2040d0" stroke-width="2.5" fill="none"/><path d="M7 8L15 4 11 12z" fill="#e02020"/></svg><svg class="a" style="left:1339px;top:1057px" width="15" height="17" viewBox="0 0 15 17"><path d="M1 1H10L14 5V16H1z" fill="#e8f0fa" stroke="#7a9ac0" stroke-width="0.8"/><rect x="3" y="4" width="5" height="4" fill="#3a70c0"/><g stroke="#7a9ac0" stroke-width="0.9"><path d="M9 5H12M9 7H12M3 10H12M3 12H12M3 14H10"/></g></svg><div class="a s" style="left:1425px;top:1052px;font-size:15px;line-height:26px;color:#fff;font-weight:bold">M</div><div class="a s nw" style="left:170px;top:1057px;font-size:12.5px;line-height:17px;letter-spacing:-0.45px;color:#fff">File Expl...</div><div class="a s nw" style="left:289px;top:1057px;font-size:12.5px;line-height:17px;letter-spacing:-0.45px;color:#fff">Google ...</div><div class="a s nw" style="left:408px;top:1057px;font-size:12.5px;line-height:17px;letter-spacing:-0.45px;color:#fff">Word 20...</div><div class="a s nw" style="left:624px;top:1057px;font-size:12.5px;line-height:17px;letter-spacing:-0.45px;color:#fff">Mindcr...</div><div class="a s nw" style="left:709px;top:1057px;font-size:12.5px;line-height:17px;letter-spacing:-0.45px;color:#fff">duologi...</div><div class="a s nw" style="left:1018px;top:1057px;font-size:12.5px;line-height:17px;letter-spacing:-0.45px;color:#fff">Franz Sc...</div><div class="a s nw" style="left:1103px;top:1057px;font-size:12.5px;line-height:17px;letter-spacing:-0.45px;color:#fff">Untitled...</div><div class="a s nw" style="left:1188px;top:1057px;font-size:12.5px;line-height:17px;letter-spacing:-0.45px;color:#fff">Form1.f...</div><div class="a s nw" style="left:1273px;top:1057px;font-size:12.5px;line-height:17px;letter-spacing:-0.45px;color:#fff">Greenh...</div><div class="a s nw" style="left:1358px;top:1057px;font-size:12.5px;line-height:17px;letter-spacing:-0.45px;color:#fff">Docum...</div><svg class="a" style="left:1507px;top:1057px" width="18" height="16" viewBox="0 0 18 16"><g fill="#e8e8e8"><path d="M4 1L8 3.5 4 6 0 3.5z"/><path d="M12 1L16 3.5 12 6 8 3.5z"/><path d="M4 6L8 8.5 4 11 0 8.5z"/><path d="M12 6L16 8.5 12 11 8 8.5z"/></g><circle cx="12" cy="12" r="4" fill="#2fa84f"/><path d="M10 12l1.5 1.5L14 10.5" stroke="#fff" stroke-width="1.2" fill="none"/></svg><svg class="a" style="left:1531px;top:1057px" width="18" height="16" viewBox="0 0 18 16"><path d="M4 13H15Q18 13 17 10Q16 8 14 8.5Q13 5 10 5Q7 5 6.5 8Q3 8 3 10.5Q3 13 4 13z" fill="#f0f0f0"/></svg><svg class="a" style="left:1556px;top:1057px" width="16" height="16" viewBox="0 0 16 16"><circle cx="8" cy="8" r="7.5" fill="#1ed760"/><g stroke="#000" stroke-width="1.3" fill="none" stroke-linecap="round"><path d="M4 5.5Q8 4.5 12 6.3"/><path d="M4.5 8.3Q8 7.5 11.3 9"/><path d="M5 10.8Q8 10.2 10.6 11.5"/></g></svg><svg class="a" style="left:1580px;top:1057px" width="16" height="16" viewBox="0 0 16 16"><path d="M7 1Q2 2 2 8Q2 14 8 15L8 12Q5 11.5 5 8Q5 4.5 7 4z" fill="#1aa0e8"/><path d="M9 8H15V15H12V11H9z" fill="#1aa0e8"/></svg><svg class="a" style="left:1604px;top:1057px" width="16" height="16" viewBox="0 0 16 16"><rect x="0.5" y="0.5" width="15" height="15" fill="#111" stroke="#bbb"/><path d="M3.5 12V4.5L8 9 12.5 4.5V12" stroke="#fff" stroke-width="1.6" fill="none"/></svg><svg class="a" style="left:1630px;top:1057px" width="16" height="16" viewBox="0 0 16 16"><g fill="none" stroke="#e8e8e8" stroke-width="1.1"><rect x="1.5" y="0.5" width="5" height="3.5"/><rect x="0.5" y="4" width="7" height="11" rx="1"/><path d="M9 12l2 2 4-5"/></g></svg><svg class="a" style="left:1652px;top:1057px" width="16" height="16" viewBox="0 0 16 16"><circle cx="8" cy="8" r="7.5" fill="#1b8c8c"/><circle cx="8" cy="8" r="5.5" fill="#e8f4f4"/><text x="8" y="11.5" font-family="Liberation Sans" font-weight="bold" font-size="10" text-anchor="middle" fill="#1b7a7a">e</text></svg><svg class="a" style="left:1676px;top:1057px" width="16" height="16" viewBox="0 0 16 16"><path d="M2 10L10 1 8 6 14 6 5 15 7 10z" fill="#e8a020" stroke="#777" stroke-width="0.6"/></svg><svg class="a" style="left:1700px;top:1057px" width="17" height="15" viewBox="0 0 17 15"><path d="M5.5 1H11.5L17 10.5H11z" fill="#f4c20d"/><path d="M5.5 1L0 10.5 3 15.5 8.5 6z" fill="#1fa463"/><path d="M3 15.5H14L17 10.5H6z" fill="#4285f4"/></svg><svg class="a" style="left:1724px;top:1057px" width="16" height="16" viewBox="0 0 16 16"><circle cx="8" cy="8" r="7.5" fill="#1e9be8"/><path d="M9.5 2L4.5 9H8L6.5 14 11.5 7H8z" fill="#fff"/></svg><svg class="a" style="left:1747px;top:1057px" width="18" height="16" viewBox="0 0 18 16"><g fill="none" stroke="#e8e8e8" stroke-width="1.1"><rect x="4.5" y="2.5" width="13" height="9"/><path d="M11 11.5V14M7 14.5H15M0.5 3.5H4M2 1V9"/></g></svg><svg class="a" style="left:1771px;top:1057px" width="18" height="16" viewBox="0 0 18 16"><g fill="none" stroke="#e8e8e8" stroke-width="1.1"><path d="M1 5.5H4L8 2V14L4 10.5H1z"/><path d="M10.5 5.5Q12 8 10.5 10.5M13 3.5Q15.5 8 13 12.5M15.5 1.5Q19 8 15.5 14.5"/></g></svg><div class="a s nw" style="left:1798px;top:1057px;font-size:12.5px;line-height:17px;letter-spacing:-1.6px;color:#fff">SWE</div><div class="a s nw" style="left:1834px;top:1057px;font-size:12.5px;line-height:17px;letter-spacing:-0.9px;color:#fff">01:00</div><svg class="a" style="left:1879px;top:1056px" width="17" height="19" viewBox="0 0 17 19"><path d="M0.5 0.5H16.5V13.5H11L8.5 16.5 6 13.5H0.5z" fill="#fff"/><g stroke="#000" stroke-width="1.2"><path d="M3 4H14M3 7H14M3 10H10"/></g></svg><div class="a" style="left:1915px;top:1050px;width:1px;height:30px;background:#444;"></div></body></html>
